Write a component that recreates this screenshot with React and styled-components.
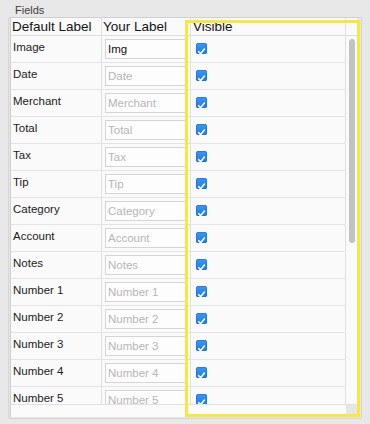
import React from 'react';
import styled, { createGlobalStyle } from 'styled-components';

const GlobalStyle = createGlobalStyle`
  html, body {
    margin: 0;
    padding: 0;
    background: #e8e8e8;
    font-family: "Liberation Sans", Arial, sans-serif;
  }
`;

const fields = [
  { name: 'Image', value: 'Img' },
  { name: 'Date' },
  { name: 'Merchant' },
  { name: 'Total' },
  { name: 'Tax' },
  { name: 'Tip' },
  { name: 'Category' },
  { name: 'Account' },
  { name: 'Notes' },
  { name: 'Number 1' },
  { name: 'Number 2' },
  { name: 'Number 3' },
  { name: 'Number 4' },
  { name: 'Number 5' }
];

const Page = styled.div`
  position: relative;
  width: 370px;
  height: 424px;
  overflow: hidden;
`;

const Title = styled.div`
  height: 17px;
  box-sizing: border-box;
  padding: 4px 0 0 15px;
  font-size: 11px;
  line-height: 13px;
  color: #3c3c3c;
`;

const GroupBox = styled.div`
  margin: 0 8px;
  width: 354px;
  height: 402px;
  box-sizing: border-box;
  border: 1px solid #d6d6d6;
  border-top-color: #d0d0d0;
  border-radius: 2px;
  background: #e6e6e6;
  padding: 0 3px 0 1px;
`;

const Table = styled.div`
  width: 347px;
  height: 399px;
  box-sizing: border-box;
  border-left: 1px solid #cfcfcf;
  background: #fafafa;
  display: flex;
  flex-direction: column;
`;

const Header = styled.div`
  display: grid;
  grid-template-columns: 91px 89px 155px 11px;
  height: 18px;
  box-sizing: border-box;
  border-bottom: 1px solid #dedede;
`;

const HeadCell = styled.div`
  padding-left: ${(p) => p.$pad || 1}px;
  border-right: ${(p) => (p.$last ? 'none' : '1px solid #e2e2e2')};
  font-size: 13.5px;
  line-height: 18px;
  color: #141414;
  white-space: nowrap;
  overflow: hidden;
`;

const Body = styled.div`
  display: flex;
  height: 368px;
  overflow: hidden;
`;

const Rows = styled.div`
  width: 335px;
  flex: none;
`;

const Row = styled.div`
  display: grid;
  grid-template-columns: 91px 89px 155px;
  height: 27px;
  box-sizing: border-box;
  border-bottom: 1px solid #e4e4e4;
`;

const Cell = styled.div`
  border-right: 1px solid #e0e0e0;
  box-sizing: border-box;
  overflow: hidden;
`;

const Label = styled(Cell)`
  padding: 4px 0 0 2px;
  font-size: 11.5px;
  line-height: 14px;
  color: #1a1a1a;
`;

const InputCell = styled(Cell)`
  padding: 3px 0 0 3px;
`;

const Input = styled.input`
  display: block;
  width: 81px;
  height: 20px;
  box-sizing: border-box;
  margin: 0;
  padding: 0 0 0 2px;
  border: 1px solid #d5d5d5;
  background: #fdfdfd;
  font-family: "Liberation Sans", Arial, sans-serif;
  font-size: 11.5px;
  color: #111;
  outline: none;
  &::placeholder {
    color: #b7b7b7;
  }
`;

const CheckCell = styled(Cell)`
  padding: 7px 0 0 5px;
`;

const Box = styled.span`
  display: block;
  width: 11px;
  height: 11px;
  border-radius: 2.5px;
  background: linear-gradient(#3a96f6, #1a7cee);
  box-shadow: inset 0 0 0 0.5px #1768d2;
`;

const Gutter = styled.div`
  flex: 1;
  padding: 3px 0 0 3px;
`;

const Thumb = styled.div`
  width: 6px;
  height: 204px;
  border-radius: 3px;
  background: #c2c2c2;
`;

const HScroll = styled.div`
  display: flex;
  height: 13px;
  box-sizing: border-box;
  border-top: 1px solid #e2e2e2;
  background: #fbfbfb;
`;

const HTrack = styled.div`
  width: 335px;
`;

const Corner = styled.div`
  flex: 1;
  height: 10px;
  background: #e6e6e6;
  border-bottom: 1px solid #dcdcdc;
`;

const Highlight = styled.div`
  position: absolute;
  left: 185px;
  top: 20px;
  width: 175px;
  height: 397px;
  box-sizing: border-box;
  border: 3px solid #f8e83c;
  pointer-events: none;
`;

function Check() {
  return (
    <Box>
      <svg width="11" height="11" viewBox="0 0 11 11">
        <path
          d="M2.7 5.7 L4.6 7.7 L8.4 3.1"
          fill="none"
          stroke="#fff"
          strokeWidth="1.6"
          strokeLinecap="round"
          strokeLinejoin="round"
        />
      </svg>
    </Box>
  );
}

export default function App() {
  return (
    <Page>
      <GlobalStyle />
      <Title>Fields</Title>
      <GroupBox>
        <Table>
          <Header>
            <HeadCell>Default Label</HeadCell>
            <HeadCell>Your Label</HeadCell>
            <HeadCell $pad={2}>Visible</HeadCell>
            <HeadCell $last />
          </Header>
          <Body>
            <Rows>
              {fields.map((f) => (
                <Row key={f.name}>
                  <Label>{f.name}</Label>
                  <InputCell>
                    <Input defaultValue={f.value || ''} placeholder={f.name} />
                  </InputCell>
                  <CheckCell>
                    <Check />
                  </CheckCell>
                </Row>
              ))}
            </Rows>
            <Gutter>
              <Thumb />
            </Gutter>
          </Body>
          <HScroll>
            <HTrack />
            <Corner />
          </HScroll>
        </Table>
      </GroupBox>
      <Highlight />
    </Page>
  );
}
